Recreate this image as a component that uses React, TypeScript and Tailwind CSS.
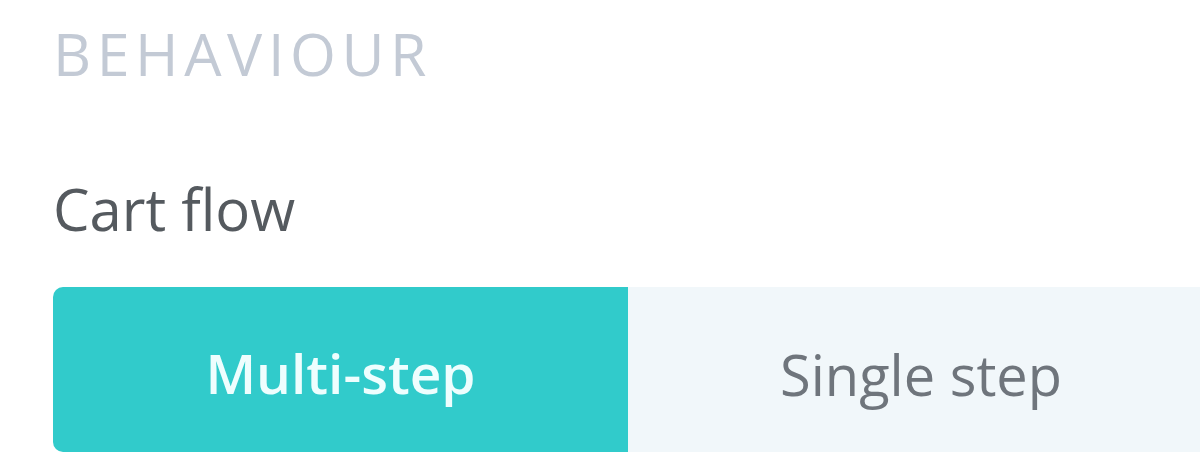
export default function App() {
  return (
    <div
      className="h-[476px] w-[1200px] overflow-hidden bg-white pl-[53px]"
      style={{ fontFamily: '"Open Sans", "Noto Sans", sans-serif' }}
    >
      <div className="pt-[13px] text-[59px] font-normal leading-[80px] tracking-[5.6px] text-[#c3cad5]">
        BEHAVIOUR
      </div>
      <div className="mt-[78px] text-[58px] leading-[76px] text-[#555a5f]">Cart flow</div>
      <div className="mt-[40px] flex h-[165px] w-[1300px]">
        <button className="flex w-[575px] items-center justify-center rounded-l-[10px] bg-[#31cbcb] pt-[8px] text-[55px] font-semibold text-[#eefefe]">
          Multi-step
        </button>
        <button className="flex flex-1 items-center justify-start bg-[#f1f7fa] pl-[152px] pt-[8px] text-[56px] text-[#6f757c]">
          Single step
        </button>
      </div>
    </div>
  );
}
